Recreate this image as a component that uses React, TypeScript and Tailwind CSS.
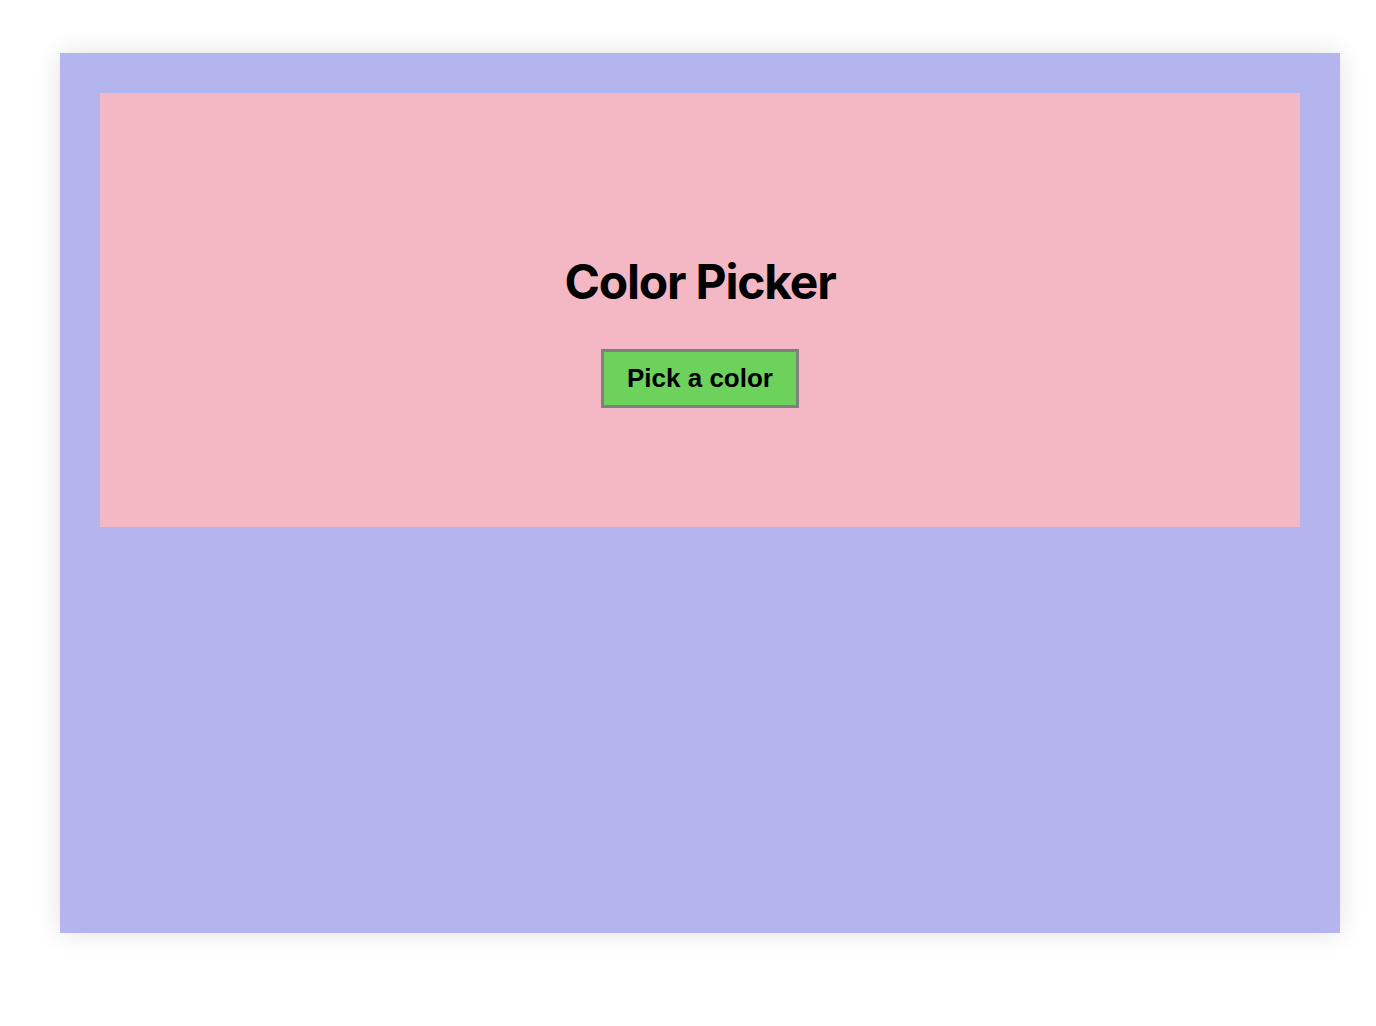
import React from 'react';

export default function App() {
  return (
    <div className="min-h-screen bg-white pt-[53px] pl-[60px]">
      <div className="w-[1280px] h-[880px] bg-[#b4b4ef] p-[40px] shadow-[0_0_24px_rgba(0,0,0,0.12)]">
        <div className="bg-[#f4b8c4] h-[434px] pt-[160px] flex flex-col items-center">
          <h1 className="font-['Inter',sans-serif] font-bold text-[48px] leading-[58px] tracking-[-1.2px] text-black">
            Color Picker
          </h1>
          <button className="mt-[38px] h-[59px] px-[23px] bg-[#6cd25c] border-[3px] border-[#808080] font-['Liberation_Sans',Arial,sans-serif] font-bold text-[26px] text-black">
            Pick a color
          </button>
        </div>
      </div>
    </div>
  );
}
